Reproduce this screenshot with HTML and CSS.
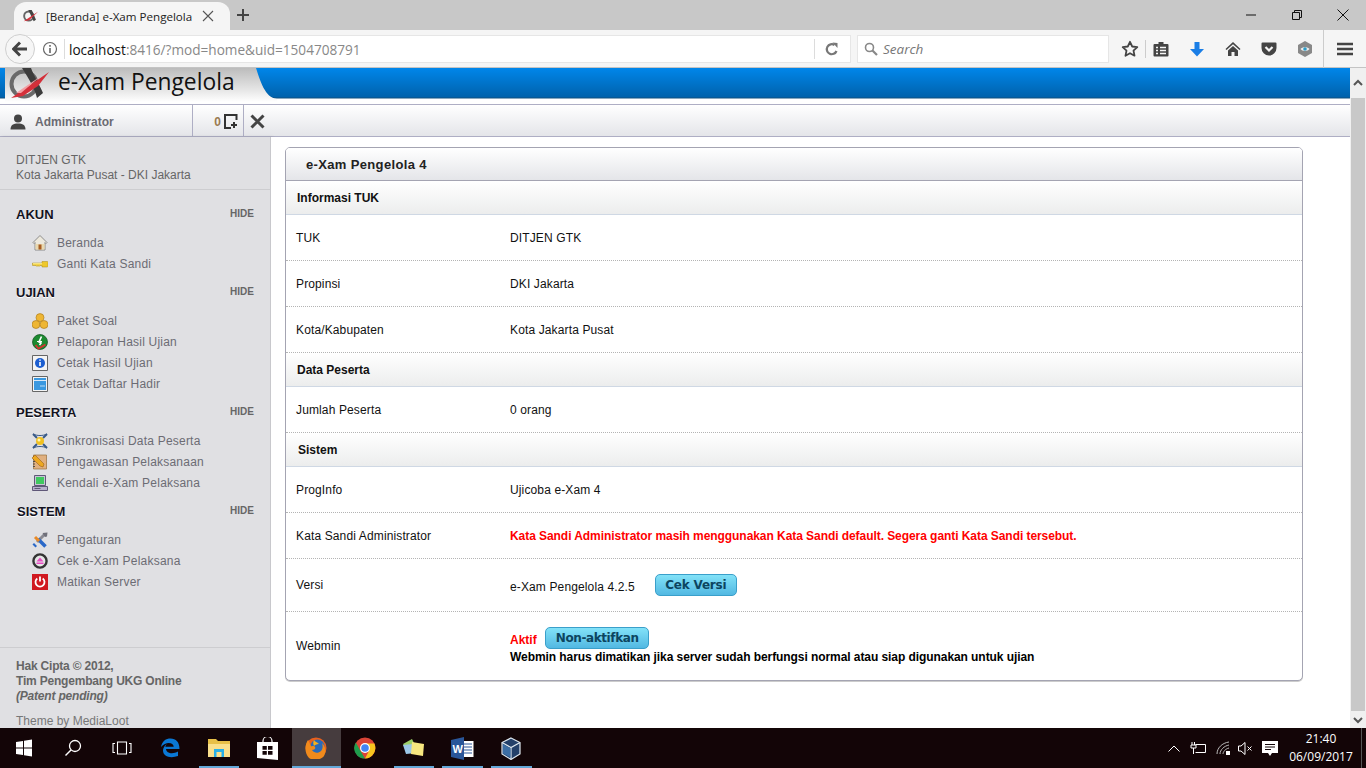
FILE: index.html
```html
<!DOCTYPE html>
<html lang="id">
<head>
<meta charset="utf-8">
<title>[Beranda] e-Xam Pengelola</title>
<link rel="stylesheet" href="styles.css">
</head>
<body>
<div class="screen">
  <div class="tabbar">
    <div class="tab">
      <svg class="fav" width="16" height="16" viewBox="0 0 42 32"><circle cx="15" cy="16" r="12" fill="none" stroke="#666" stroke-width="5"/><path d="M14 0h9l11 26-6 4z" fill="#444"/><path d="M2 30 40 4 16 27z" fill="#d8323c"/></svg>
      <span class="tab-title">[Beranda] e-Xam Pengelola</span>
      <svg class="tab-x" width="12" height="12" viewBox="0 0 12 12"><path d="M1 1l10 10M11 1 1 11" stroke="#555" stroke-width="1.1"/></svg>
    </div>
    <svg class="newtab" width="14" height="14" viewBox="0 0 14 14"><path d="M7 1v12M1 7h12" stroke="#444" stroke-width="2"/></svg>
    <div class="winctl">
      <span class="winbtn"><svg width="12" height="12" viewBox="0 0 12 12"><path d="M1 6h10" stroke="#111" stroke-width="1"/></svg></span>
      <span class="winbtn"><svg width="12" height="12" viewBox="0 0 12 12"><path d="M1.500 3.500h7v7h-7zM3.500 3.500v-2h7v7h-2" fill="none" stroke="#111" stroke-width="1"/></svg></span>
      <span class="winbtn"><svg width="12" height="12" viewBox="0 0 12 12"><path d="M.5.5l11 11M11.500.5l-11 11" stroke="#111" stroke-width="1"/></svg></span>
    </div>
  </div>

  <div class="toolbar">
    <div class="back"><svg width="16" height="16" viewBox="0 0 16 16"><path d="M8 1.500 1.500 8 8 14.500M2 8h13" fill="none" stroke="#444" stroke-width="3"/></svg></div>
    <div class="urlbox">
      <svg class="info" width="16" height="16" viewBox="0 0 16 16"><circle cx="8" cy="8" r="6.500" fill="none" stroke="#666" stroke-width="1.200"/><path d="M8 7v5M8 4v1.800" stroke="#666" stroke-width="1.600"/></svg>
      <span class="urlsep"></span>
      <span class="url"><span class="host">localhost</span>:8416/?mod=home&amp;uid=1504708791</span>
      <span class="urlsep urlsep-end"></span>
      <svg class="reload" width="14" height="14" viewBox="0 0 14 14"><path d="M11.500 9A5 5 0 1 1 9.500 3" fill="none" stroke="#777" stroke-width="2.200"/><path d="M7.500 0.500 12.500 1v5z" fill="#777"/></svg>
    </div>
    <div class="searchbox">
      <svg width="14" height="14" viewBox="0 0 14 14"><circle cx="5.500" cy="5.500" r="4" fill="none" stroke="#888" stroke-width="1.600"/><path d="M8.500 8.500l4.500 4.500" stroke="#888" stroke-width="2.200"/></svg>
      <span>Search</span>
    </div>
    <span class="tbtn tbtn-star"><svg width="18" height="18" viewBox="0 0 18 18"><path d="M9 1.800l2.200 4.700 5.100.6-3.800 3.500 1 5.100L9 13.200l-4.500 2.500 1-5.100L1.700 7.100l5.100-.6z" fill="none" stroke="#444" stroke-width="1.800" stroke-linejoin="round"/></svg></span>
    <span class="tsep"></span>
    <span class="tbtn"><svg width="16" height="16" viewBox="0 0 16 16"><path d="M1.500 3h13a1 1 0 0 1 1 1v10.500a1 1 0 0 1-1 1h-13a1 1 0 0 1-1-1V4a1 1 0 0 1 1-1z" fill="#444"/><path d="M5.500 3.500V1h5v2.500z" fill="#444"/><path d="M3 6.500h2M7 6.500h6M3 9.500h2M7 9.500h6M3 12.500h2M7 12.500h6" stroke="#f5f5f5" stroke-width="1.500"/></svg></span>
    <span class="tbtn"><svg width="16" height="16" viewBox="0 0 16 16"><path d="M5.500 1h5v7H15l-7 7.500L1 8h4.500z" fill="#1a7ee6"/></svg></span>
    <span class="tbtn"><svg width="16" height="16" viewBox="0 0 16 16"><path d="M8 1 0.500 8l1 1L8 3.200 14.500 9l1-1zM3 9.500 8 5l5 4.500V15H9.500v-4h-3v4H3z" fill="#444"/></svg></span>
    <span class="tbtn"><svg width="16" height="16" viewBox="0 0 16 16"><path d="M1.500 1.500h13a1 1 0 0 1 1 1V7A7.500 7.500 0 0 1 .5 7V2.500a1 1 0 0 1 1-1z" fill="#444"/><path d="M4.500 6 8 9.500 11.500 6" fill="none" stroke="#f5f5f5" stroke-width="2.200"/></svg></span>
    <span class="tbtn"><svg width="16" height="16" viewBox="0 0 16 16"><path d="M8 0l7 4v8l-7 4-7-4V4z" fill="#888"/><path d="M3.500 8C5 5.500 11 5.500 12.500 8 11 10.500 5 10.500 3.500 8z" fill="#eee"/><circle cx="8" cy="8" r="1.800" fill="#2d9cc8"/></svg></span>
    <span class="tsep tsep-menu"></span>
    <span class="tbtn tbtn-menu"><svg width="16" height="14" viewBox="0 0 16 14"><path d="M0 2h16M0 7h16M0 12h16" stroke="#444" stroke-width="2.400"/></svg></span>
  </div>

  <div class="viewport">
    <div class="page">
      <header class="topbar">
        <div class="brand">
          <svg class="logo" width="42" height="32" viewBox="0 0 42 32"><circle cx="15" cy="16" r="12.500" fill="none" stroke="#6a6a6a" stroke-width="4"/><path d="M13 0h9c3 8 7 14 12 25l-6 5c-2-8-7-18-15-30z" fill="#3c3c3c"/><path d="M2 30 40 4 29 18 14 28z" fill="#d4303a"/><path d="M7 25 32 8 12 25z" fill="#f2a0a4"/></svg>
          <span class="brand-name">e-Xam Pengelola</span>
        </div>
      </header>
      <div class="userbar">
        <div class="user">
          <svg width="16" height="16" viewBox="0 0 16 16"><circle cx="8" cy="4.500" r="4" fill="#444"/><path d="M0.500 15.500c0-4.500 3-6 7.500-6s7.500 1.500 7.500 6z" fill="#444"/></svg>
          <span>Administrator</span>
        </div>
        <div class="msgs">
          <span class="msgcount">0</span>
          <svg width="14" height="15" viewBox="0 0 14 15"><path d="M12.500 6V1H1v13h6" fill="none" stroke="#333" stroke-width="2"/><path d="M10 8v6M7 11h6" stroke="#333" stroke-width="2"/></svg>
        </div>
        <div class="closeit"><svg width="15" height="15" viewBox="0 0 15 15"><path d="M1.500 1.500l12 12M13.500 1.500l-12 12" stroke="#444" stroke-width="3"/></svg></div>
      </div>
      <div class="body">
        <aside class="sidebar">
          <div class="side-info">DITJEN GTK<br>Kota Jakarta Pusat - DKI Jakarta</div>

          <div class="sec-head"><h3>AKUN</h3><a>HIDE</a></div>
          <ul class="menu">
            <li><svg viewBox="0 0 16 16"><path d="M8 .5 1 7.500l1 1 1-1V15h10V7.500l1 1 1-1z" fill="#ece8dc" stroke="#777" stroke-width=".8"/><path d="M3.500 9h9v5.500h-9z" fill="#e8d8b0"/><path d="M6.500 9.500h3v5h-3z" fill="#a85c20"/></svg>Beranda</li>
            <li><svg viewBox="0 0 16 16"><path d="M.5 7h9.500V5.500h5.500l.5 1v4l-.5.500H10V9.500H8l-1 1-1-1-1 1-1-1H.5z" fill="#eec82c" stroke="#a88a18" stroke-width=".5"/><path d="M1 7.800h9" stroke="#fff4a8"/></svg>Ganti Kata Sandi</li>
          </ul>

          <div class="sec-head"><h3>UJIAN</h3><a>HIDE</a></div>
          <ul class="menu">
            <li><svg viewBox="0 0 16 16"><circle cx="8" cy="4.600" r="4" fill="#eeb634" stroke="#b08020" stroke-width=".7"/><circle cx="4" cy="11.500" r="4" fill="#eeb634" stroke="#b08020" stroke-width=".7"/><circle cx="12" cy="11.500" r="4" fill="#eeb634" stroke="#b08020" stroke-width=".7"/></svg>Paket Soal</li>
            <li><svg viewBox="0 0 16 16"><circle cx="8" cy="8" r="7.500" fill="#1c8a30" stroke="#0d4d1a" stroke-width=".7"/><path d="M9.500 2.500 7 8l2 1-1.500 2" fill="none" stroke="#fff" stroke-width="1.600"/><path d="M5 7.500h5" stroke="#fff"/><path d="M3.500 11l3 3.500 7-4" fill="none" stroke="#d83030" stroke-width="1.800"/></svg>Pelaporan Hasil Ujian</li>
            <li><svg viewBox="0 0 16 16"><path d="M.5.500h15v15H.5z" fill="#f4f4f4" stroke="#666"/><circle cx="8" cy="8" r="5" fill="#1c5ed0"/><path d="M8 7v4M8 4.500v1.300" stroke="#fff" stroke-width="1.600"/></svg>Cetak Hasil Ujian</li>
            <li><svg viewBox="0 0 16 16"><path d="M.5.500h15v15H.5z" fill="#f4f4f4" stroke="#666"/><path d="M2 2h12v12H2z" fill="#3a98e0"/><path d="M2 4.500h12" stroke="#d8e8f8" stroke-width="1"/><path d="M8 10h5" stroke="#bcdcf4" stroke-width="1"/></svg>Cetak Daftar Hadir</li>
          </ul>

          <div class="sec-head"><h3>PESERTA</h3><a>HIDE</a></div>
          <ul class="menu">
            <li><svg viewBox="0 0 16 16"><path d="M1 1l4 4M15 1l-4 4M1 15l4-4M15 15l-4-4" stroke="#3a5a88" stroke-width="2"/><path d="M1 1c4 2 10 2 14 0M1 15c4-2 10-2 14 0" fill="none" stroke="#3a5a88" stroke-width="1"/><circle cx="8" cy="8" r="4" fill="#f0c020"/><circle cx="7" cy="7" r="1.500" fill="#fff4b0"/></svg>Sinkronisasi Data Peserta</li>
            <li><svg viewBox="0 0 16 16"><path d="M1.500 1h13v14h-13z" fill="#e0b080" stroke="#96703c" stroke-width=".7"/><path d="M1 2.500h2M1 5h2M1 7.500h2M1 10h2M1 12.500h2" stroke="#444" stroke-width=".9"/><path d="M3 1l9 9-1 3-3-1-8-8z" fill="#eca820" stroke="#8a5010" stroke-width=".5"/></svg>Pengawasan Pelaksanaan</li>
            <li><svg viewBox="0 0 16 16"><path d="M2.500.5h11v10h-11z" fill="#c8c4d4" stroke="#605878"/><path d="M4 2h8v7H4z" fill="#40c860"/><path d="M.5 11.500h15v4H.5z" fill="#b8b0cc" stroke="#605878"/><path d="M2.500 13.500h6" stroke="#605878"/></svg>Kendali e-Xam Pelaksana</li>
          </ul>

          <div class="sec-head sec-sistem"><h3>SISTEM</h3><a>HIDE</a></div>
          <ul class="menu">
            <li><svg viewBox="0 0 16 16"><path d="M5 10 13 2" stroke="#8a8a92" stroke-width="3"/><path d="M10.500 1 15.500 .5 15 4.500l-2 .5z" fill="#70707a"/><path d="M6 7l7.500 7.500" stroke="#2a68c8" stroke-width="3.500"/><path d="M3 5l4 4" stroke="#e88a28" stroke-width="3"/><path d="M2 11l3 3-1.500 1.500-3-3z" fill="#2a68c8"/></svg>Pengaturan</li>
            <li><svg viewBox="0 0 16 16"><circle cx="8" cy="8" r="6.600" fill="#e4e4e4" stroke="#333" stroke-width="2.400"/><path d="M4.500 8.500 8 4.500l3.500 4zM4.500 9.500h7v1.500h-7z" fill="#e84cc4"/></svg>Cek e-Xam Pelaksana</li>
            <li><svg viewBox="0 0 16 16"><path d="M0 0h16v16H0z" fill="#d01820"/><path d="M5.300 4.500a4.500 4.500 0 1 0 5.400 0" fill="none" stroke="#fff" stroke-width="1.800"/><path d="M8 2.500v5" stroke="#fff" stroke-width="1.800"/></svg>Matikan Server</li>
          </ul>

          <div class="side-foot">
            <p class="copy">Hak Cipta © 2012,<br>Tim Pengembang UKG Online<br><em>(Patent pending)</em></p>
            <p class="theme">Theme by MediaLoot</p>
          </div>
        </aside>

        <main class="main">
          <section class="panel">
            <h2 class="panel-head">e-Xam Pengelola 4</h2>
            <div class="band">Informasi TUK</div>
            <div class="row"><div>TUK</div><div>DITJEN GTK</div></div>
            <div class="row"><div>Propinsi</div><div>DKI Jakarta</div></div>
            <div class="row"><div>Kota/Kabupaten</div><div>Kota Jakarta Pusat</div></div>
            <div class="band">Data Peserta</div>
            <div class="row"><div>Jumlah Peserta</div><div>0 orang</div></div>
            <div class="band band-sistem">Sistem</div>
            <div class="row"><div>ProgInfo</div><div>Ujicoba e-Xam 4</div></div>
            <div class="row"><div>Kata Sandi Administrator</div><div class="warn">Kata Sandi Administrator masih menggunakan Kata Sandi default. Segera ganti Kata Sandi tersebut.</div></div>
            <div class="row row-versi"><div>Versi</div><div class="inline"><span class="ver">e-Xam Pengelola 4.2.5</span><button class="btn btn-versi">Cek Versi</button></div></div>
            <div class="row row-webmin"><div class="webmin-label">Webmin</div><div>
              <div class="inline"><span class="aktif">Aktif</span><button class="btn btn-non">Non-aktifkan</button></div>
              <div class="note">Webmin harus dimatikan jika server sudah berfungsi normal atau siap digunakan untuk ujian</div>
            </div></div>
          </section>
        </main>
      </div>
    </div>
    <div class="scrollbar">
      <span class="sb-btn"><svg width="10" height="8" viewBox="0 0 10 8"><path d="M1 6 5 2l4 4" fill="none" stroke="#555" stroke-width="2"/></svg></span>
      <span class="sb-thumb"></span>
      <span class="sb-btn sb-down"><svg width="10" height="8" viewBox="0 0 10 8"><path d="M1 2l4 4 4-4" fill="none" stroke="#555" stroke-width="2"/></svg></span>
    </div>
  </div>

  <footer class="taskbar">
    <span class="tk"><svg width="18" height="18" viewBox="0 0 18 18"><path d="M1 3 8 2v6.500H1zM9 1.800l8-1.300v8H9zM1 9.500h7V16l-7-1zM9 9.500h8v8l-8-1.300z" fill="#fff"/></svg></span>
    <span class="tk"><svg width="18" height="18" viewBox="0 0 18 18"><circle cx="11" cy="7" r="5.500" fill="none" stroke="#fff" stroke-width="1.300"/><path d="M7 11 1.500 16.500" stroke="#fff" stroke-width="1.500"/></svg></span>
    <span class="tk"><svg width="20" height="14" viewBox="0 0 20 14"><path d="M5.500 1h9v12h-9zM3 2.500H1v9h2M17 2.500h2v9h-2" fill="none" stroke="#fff" stroke-width="1.100"/></svg></span>
    <span class="tk"><svg width="20" height="20" viewBox="0 0 20 20"><path d="M1 9C2 3 6 .5 10.500.5 16 .5 19.500 4 19.500 11H6c.3 4.500 7 5.500 12 2.500v4.500C11 20.500 3 19 3 12.500 3 10 4.500 7.500 7 6c-1 1-1.500 2-1.700 2.800h8.400C13.700 4.500 6 3 1 9z" fill="#0a78d4"/></svg></span>
    <span class="tk open open-split"><svg width="22" height="20" viewBox="0 0 22 20"><path d="M0 1h8l2 2h12v16H0z" fill="#e8c048"/><path d="M0 6h22v13H0z" fill="#fae08c"/><path d="M6 11h10v8h-2.500v-5h-5v5H6z" fill="#28b0e8"/></svg></span>
    <span class="tk"><svg width="21" height="23" viewBox="0 0 21 23"><path d="M6 6V4a4.500 4.500 0 0 1 9 0v2" fill="none" stroke="#fff" stroke-width="1.200"/><path d="M0 5h21v18L0 21z" fill="#fff"/><path d="M5.500 9h4.300v3.800H5.500zM11 9h4.500v3.800H11zM5.500 14h4.300v3.800H5.500zM11 14h4.500v3.800H11z" fill="#130507"/></svg></span>
    <span class="tk open active"><svg width="22" height="22" viewBox="0 0 22 22"><circle cx="11" cy="11" r="10.500" fill="#e8601c"/><circle cx="12.500" cy="9.500" r="7" fill="#2a6ab8"/><path d="M3 3c2 3 2 5 3 6s3-1 4 1-1 3-3 3c2 3 6 4 9 1 2-2 2-6 1-8 3 3 5 8 2 13-3 4-11 5-15 2C0 17-1 9 3 3z" fill="#f08a1c"/><path d="M9 3c1 2 3 2 5 4-3 0-4 1-5 2-1-2-1-4 0-6z" fill="#f6b01c"/></svg></span>
    <span class="tk"><svg width="22" height="22" viewBox="0 0 22 22"><circle cx="11" cy="11" r="10.500" fill="#db4437"/><path d="M1.800 5.500 6.500 14 11 21.500A10.500 10.500 0 0 1 1.800 5.500z" fill="#1f9e4d"/><path d="M11 6.500h9.300A10.500 10.500 0 0 1 11 21.500L15 14z" fill="#f7c51e"/><circle cx="11" cy="11" r="5" fill="#fff"/><circle cx="11" cy="11" r="3.800" fill="#4285f4"/></svg></span>
    <span class="tk open"><svg width="24" height="20" viewBox="0 0 24 20"><path d="M1 6 10 1l4 8-9 5z" fill="#9ccf68"/><path d="M1 7l10-1 3 9-10 1z" fill="#9cc8e8"/><path d="M10 4l12 2 -1 12-12-2z" fill="#f8e880"/></svg></span>
    <span class="tk open open-split"><svg width="23" height="23" viewBox="0 0 23 23"><path d="M9 4h13.500v16H9z" fill="#fff"/><path d="M13 7h8M13 10h8M13 13h8M13 16h8" stroke="#2a5699" stroke-width="1.200"/><path d="M0 3 13 0v23L0 20z" fill="#2a5699"/><text x="1.500" y="15.500" class="word-w">W</text></svg></span>
    <span class="tk open"><svg width="20" height="23" viewBox="0 0 20 23"><path d="M10 1 19 5.500V17l-9 5.500L1 17V5.500z" fill="#23406a" stroke="#dfe8f0" stroke-width="1.200"/><path d="M1 5.500l9 5 9-5M10 10.500v11.500" fill="none" stroke="#dfe8f0" stroke-width="1.200"/><path d="M2 7l7.500 4.200v9.300L2 16.500z" fill="#3c6ea4"/></svg></span>
    <div class="tray">
      <svg class="tr-chev" width="12" height="7" viewBox="0 0 12 7"><path d="M.5 6.500 6 1l5.500 5.500" fill="none" stroke="#fff" stroke-width="1"/></svg>
      <svg class="tr-bat" width="17" height="12" viewBox="0 0 17 12"><path d="M5.500 2.500h10v8h-10" fill="none" stroke="#fff"/><path d="M2 0v3M4.500 0v3M1 3h5v3H1zM3.500 6v6" fill="none" stroke="#fff"/></svg>
      <svg class="tr-wifi" width="14" height="14" viewBox="0 0 14 14"><path d="M1 13C1 7 6 2 13 1M4 13c0-4 4-8 9-9M7 13c0-2 2-5 6-6" fill="none" stroke="#bbb" stroke-width="1"/><path d="M10 10h4v4h-4z" fill="#fff"/></svg>
      <svg class="tr-vol" width="15" height="13" viewBox="0 0 15 13"><path d="M.5 4h2.500L7 .5v12L3 9H.5zM9.500 4.500l4 4M13.500 4.500l-4 4" fill="none" stroke="#fff"/></svg>
      <svg class="tr-note" width="16" height="15" viewBox="0 0 16 15"><path d="M0 0h16v12H10l-2 3-2-3H0z" fill="#fff"/><path d="M3 3.500h10M3 6h10M3 8.500h6" stroke="#130507"/></svg>
      <div class="clock"><div>21:40</div><div>06/09/2017</div></div>
      <span class="showdesk"></span>
    </div>
  </footer>
</div>
</body>
</html>
```
FILE: styles.css
```css
* { box-sizing: border-box; }
html, body { margin: 0; padding: 0; height: 100%; overflow: hidden; }
body { font-family: "Liberation Sans", Arial, sans-serif; font-size: 12px; color: #000; }
.screen { width: 1366px; height: 768px; display: flex; flex-direction: column; overflow: hidden; }

/* browser tab strip */
.tabbar { height: 30px; flex: none; background: #c8c8c8; display: flex; align-items: center; }
.tab { margin: 2px 0 0 14px; width: 216px; height: 28px; background: #f5f5f5; border-radius: 12px 12px 0 0; display: flex; align-items: center; padding-left: 9px; }
.fav { flex: none; }
.tab-title { font-family: "Open Sans", sans-serif; font-size: 11.600px; color: #222; margin-left: 7px; white-space: nowrap; width: 146px; }
.tab-x { margin-left: 10px; flex: none; }
.newtab { margin-left: 6px; }
.winctl { margin-left: auto; display: flex; margin-right: 0; }
.winbtn { width: 46px; height: 30px; display: flex; align-items: center; justify-content: center; }

/* browser toolbar */
.toolbar { height: 38px; flex: none; background: #f5f5f5; border-bottom: 1px solid #c4c4c4; display: flex; align-items: center; position: relative; padding-left: 21px; }
.back { position: absolute; left: 5px; top: 4px; width: 30px; height: 30px; border-radius: 50%; border: 1px solid #cfcfcf; background: #f6f6f6; display: flex; align-items: center; justify-content: center; }
.urlbox { width: 830px; height: 28px; background: #fff; border: 1px solid #e6e6e6; display: flex; align-items: center; padding-left: 20px; }
.info { flex: none; }
.urlsep { width: 1px; height: 20px; background: #dcdcdc; margin: 0 4px 0 6px; flex: none; }
.url { font-family: "Open Sans", sans-serif; font-size: 13.600px; color: #888; white-space: nowrap; padding-top: 1px; }
.host { color: #111; }
.urlsep-end { margin: 0 10px 0 auto; }
.reload { flex: none; margin-right: 11px; }
.searchbox { width: 252px; height: 28px; margin: 0 0 0 6px; background: #fff; border: 1px solid #e6e6e6; display: flex; align-items: center; padding-left: 6px; font-family: "Open Sans", sans-serif; font-style: italic; font-size: 13.500px; color: #777; }
.searchbox span { margin-left: 5px; }
.tbtn { width: 36px; height: 30px; display: flex; align-items: center; justify-content: center; flex: none; }
.tbtn-star { width: 31px; margin-left: 5px; }
.tsep { width: 1px; height: 18px; background: #ccc; flex: none; margin-right: -3px; }
.tsep-menu { height: 38px; margin-right: 0; }
.tbtn-menu { width: 42px; }

/* page */
.viewport { flex: 1; display: flex; min-height: 0; }
.page { flex: 1; min-width: 0; display: flex; flex-direction: column; }
.topbar { height: 37px; flex: none; background: linear-gradient(#0086ea, #0062ac 29px, #11507e 30px, #fff 31px); border-bottom: 1px solid #aeaec4; display: flex; padding-left: 5px; }
.brand { width: 272px; height: 36px; background: linear-gradient(#bcbcbc, #e6e6e6 22px, #fff 34px); clip-path: path("M0 0 L251 0 C255 12 260 30 272 31 L272 36 L0 36 Z"); display: flex; align-items: flex-start; }
.logo { margin: 0 0 0 4px; flex: none; }
.brand-name { font-family: "Open Sans", sans-serif; font-size: 22.800px; line-height: 27px; color: #111; margin-left: 7px; }
.userbar { height: 32px; flex: none; background: linear-gradient(#fff, #e4e5e9); border-bottom: 1px solid #aeaec4; display: flex; padding-top: 0; }
.user { width: 193px; border-right: 1px solid #aeaec4; display: flex; align-items: center; padding: 2px 0 0 10px; font-weight: bold; color: #6a6a72; }
.user span { margin-left: 9px; }
.msgs { width: 51px; border-right: 1px solid #aeaec4; display: flex; align-items: center; justify-content: flex-end; padding: 2px 5px 0 0; }
.msgcount { font-weight: bold; color: #9a7a50; margin-right: 3px; }
.closeit { width: 26px; display: flex; align-items: center; justify-content: center; padding-top: 1px; }

.body { flex: 1; min-height: 0; display: flex; }

/* sidebar */
.sidebar { width: 271px; flex: none; background: #e0e0e3; border-right: 1px solid #c8c8cc; box-shadow: 2px 0 3px rgba(0,0,0,.12); display: flex; flex-direction: column; overflow: hidden; color: #666; }
.side-info { padding: 16px 16px 6px; line-height: 15px; border-bottom: 1px solid #cdcdd0; height: 53px; flex: none; }
.sec-head { height: 20px; margin: 0 16px 8px; display: flex; align-items: center; justify-content: space-between; flex: none; }
.side-info + .sec-head { margin-top: 14px; }
.sec-head h3 { margin: 0; font-size: 13px; font-weight: bold; color: #12121e; text-shadow: 0 1px 0 #fff; }
.sec-head a { font-size: 10px; font-weight: bold; color: #666; padding-bottom: 2px; }
.sec-sistem h3 { margin-left: 1px; }
.menu { list-style: none; margin: 0 0 8px; padding: 0 0 0 32px; flex: none; }
.menu li { height: 21px; display: flex; align-items: center; color: #6c6c74; white-space: nowrap; letter-spacing: .22px; }
.menu svg { width: 16px; height: 16px; margin-right: 9px; flex: none; }
.side-foot { margin-top: auto; height: 81px; flex: none; border-top: 1px solid #cdcdd0; padding: 11px 16px 0; line-height: 15px; }
.side-foot p { margin: 0; }
.copy { font-weight: bold; color: #666; letter-spacing: -.2px; }
.theme { margin-top: 10px !important; color: #777; }

/* main panel */
.main { flex: 1; min-width: 0; background: #fff; padding: 10px 47px 0 14px; }
.panel { height: 534px; border: 1px solid #a4a4b2; border-radius: 5px; overflow: hidden; background: #fff; box-shadow: 0 1px 0 #ccc; }
.panel-head { margin: 0; height: 33px; padding-left: 20px; font-size: 13px; letter-spacing: .35px; font-weight: bold; line-height: 34px; color: #222; background: linear-gradient(#fff, #e4e5e9); border-bottom: 1px solid #a4a4b2; }
.band { height: 34px; padding-left: 11px; font-weight: bold; line-height: 35px; color: #111; background: linear-gradient(#fff, #eceded); border-bottom: 1px solid #cfd8e4; }
.band-sistem { padding-left: 12px; }
.row { height: 46px; display: grid; grid-template-columns: 214px 1fr; align-items: center; padding: 0 10px; border-bottom: 1px dotted #b4b4b4; color: #111; letter-spacing: .13px; }
.warn { color: #f00; font-weight: bold; letter-spacing: -.06px; }
.row-versi { height: 53px; }
.row-webmin { height: 68px; border-bottom: 0; padding-bottom: 2px; }
.webmin-label { padding-top: 2px; }
.inline { display: flex; align-items: flex-start; }
.ver { padding-top: 3px; margin-bottom: -1px; line-height: 22px; }
.btn { height: 22px; padding: 0; border: 1px solid #3a9fca; border-radius: 5px; background: linear-gradient(#82e2f8, #52b8e2); font-family: "DejaVu Sans", sans-serif; font-weight: bold; font-size: 12px; line-height: 20px; color: #0c4560; flex: none; }
.btn-versi { width: 82px; margin: 1px 0 0 20px; letter-spacing: -.2px; }
.btn-non { width: 104px; margin: 1px 0 0 8.500px; letter-spacing: -.4px; }
.aktif { color: #f00; font-weight: bold; padding-top: 3px; line-height: 22px; letter-spacing: 0; }
.note { font-weight: bold; line-height: 15px; margin: -1px 0; color: #000; letter-spacing: -.07px; }

/* scrollbar */
.scrollbar { width: 16px; flex: none; background: #f0f0f0; display: flex; flex-direction: column; align-items: center; }
.sb-btn { height: 30px; width: 16px; display: flex; align-items: center; justify-content: center; flex: none; }
.sb-down { height: 17px; }
.sb-thumb { flex: 1; width: 14px; background: #c8c8c8; }

/* taskbar */
.taskbar { height: 40px; flex: none; background: #130507; display: flex; align-items: center; }
.tk { width: 48.700px; height: 40px; display: flex; align-items: center; justify-content: center; flex: none; position: relative; }
.tk.open::after { content: ""; position: absolute; left: 4px; right: 4px; bottom: 0; height: 2px; background: #63a8d8; }
.tk.active { background: #463c3e; }
.tk.active::after { left: 0; right: 0; }
.word-w { font-family: "Liberation Sans", sans-serif; font-size: 11px; font-weight: bold; fill: #fff; }
.tray { margin-left: auto; display: flex; align-items: center; height: 40px; }
.tr-chev { margin-right: 10px; }
.tr-bat { margin-right: 9px; }
.tr-wifi { margin-right: 8px; }
.tr-vol { margin-right: 9px; }
.tr-note { margin-right: 9px; }
.clock { width: 68px; text-align: center; color: #fff; font-family: "Open Sans", sans-serif; font-size: 12px; line-height: 18px; }
.showdesk { width: 1px; height: 40px; background: #555; margin: 0 4px 0 6px; }
```
